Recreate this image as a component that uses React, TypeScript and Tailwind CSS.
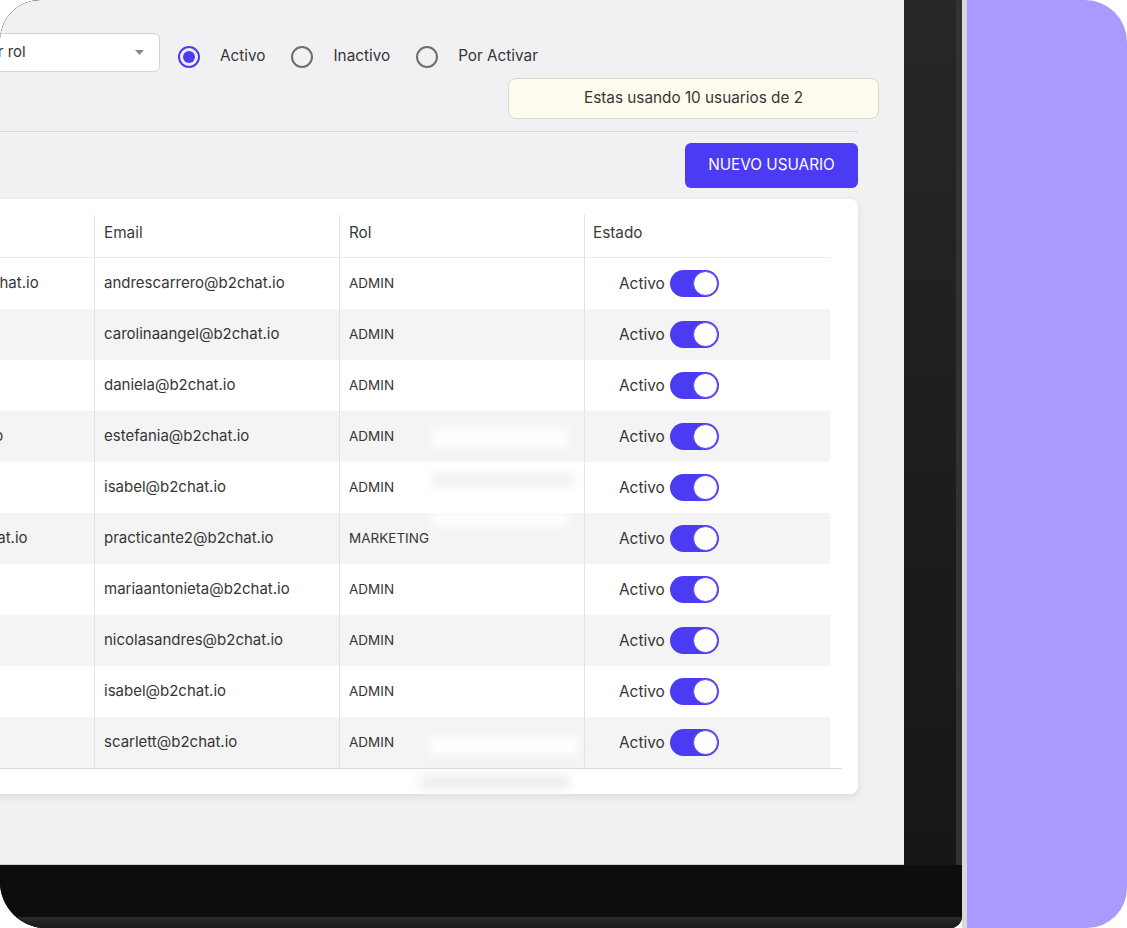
import React from "react";

type Row = { name: string; email: string; rol: string };

const rows: Row[] = [
  { name: "andrescarrero@b2chat.io", email: "andrescarrero@b2chat.io", rol: "ADMIN" },
  { name: "Carolina Angel", email: "carolinaangel@b2chat.io", rol: "ADMIN" },
  { name: "Daniela", email: "daniela@b2chat.io", rol: "ADMIN" },
  { name: "estefania@b2chat.io", email: "estefania@b2chat.io", rol: "ADMIN" },
  { name: "Isabel", email: "isabel@b2chat.io", rol: "ADMIN" },
  { name: "practicante2@b2chat.io", email: "practicante2@b2chat.io", rol: "MARKETING" },
  { name: "Maria Antonieta", email: "mariaantonieta@b2chat.io", rol: "ADMIN" },
  { name: "Nicolas Andres", email: "nicolasandres@b2chat.io", rol: "ADMIN" },
  { name: "Isabel", email: "isabel@b2chat.io", rol: "ADMIN" },
  { name: "Scarlett", email: "scarlett@b2chat.io", rol: "ADMIN" },
];

function Radio({ checked, label, first }: { checked?: boolean; label: string; first?: boolean }) {
  return (
    <div className={`flex items-center ${first ? "" : "ml-[26px]"}`}>
      {checked ? (
        <div className="w-[22px] h-[22px] rounded-full border-[2px] border-[#4b3bf2] flex items-center justify-center">
          <div className="w-[12px] h-[12px] rounded-full bg-[#4b3bf2]" />
        </div>
      ) : (
        <div className="w-[22px] h-[22px] rounded-full border-[2px] border-[#6e6e6e]" />
      )}
      <span className="ml-[20px] text-[15.3px] text-[#363636]">{label}</span>
    </div>
  );
}

function Toggle() {
  return (
    <div className="w-[49px] h-[27px] rounded-full bg-[#4b3bf2] p-[1px] flex justify-end">
      <div className="w-[25px] h-[25px] rounded-full bg-white border border-[#5a4bf4]" />
    </div>
  );
}

export default function App() {
  return (
    <div className="w-[1127px] h-[928px] bg-white flex overflow-hidden font-['Inter',sans-serif]">
      {/* Tablet */}
      <div className="w-[962px] h-[928px] flex flex-col rounded-tl-[40px] rounded-bl-[46px] rounded-br-[12px] overflow-hidden bg-[#0e0e0e]">
        <div className="flex h-[865px]">
          {/* Screen */}
          <div className="relative w-[904px] h-[865px] overflow-hidden rounded-tl-[40px] bg-[#f1f1f3] border-b border-[#cfcfd3]">
            <div className="flex flex-col w-[1100px] ml-[-242px] pt-[33px]">
              {/* Filters */}
              <div className="flex items-center h-[39px]">
                <div className="w-[131px] h-[39px] bg-white border border-[#d3d3d6] rounded-[6px]" />
                <div className="ml-[18px] w-[253px] h-[39px] bg-white border border-[#d3d3d6] rounded-[6px] flex items-center justify-between pl-[12px] pr-[15px]">
                  <span className="text-[15px] text-[#363636]">Seleccionar rol</span>
                  <svg width="9" height="5" viewBox="0 0 9 5">
                    <path d="M0 0 L9 0 L4.5 5 Z" fill="#8a8a8a" />
                  </svg>
                </div>
                <div className="ml-[18px] pt-[8px] flex items-center">
                  <Radio checked label="Activo" first />
                  <Radio label="Inactivo" />
                  <Radio label="Por Activar" />
                </div>
              </div>

              {/* Notice */}
              <div className="mt-[6px] flex justify-end mr-[-21px]">
                <div className="w-[371px] h-[41px] rounded-[8px] bg-[#fdfcee] border border-[#dcd8c6] flex items-center justify-center text-[15.3px] text-[#363636]">
                  Estas usando 10 usuarios de 2
                </div>
              </div>

              <div className="mt-[12px] h-px bg-[#d6d6da]" />

              <div className="mt-[11px] flex justify-end">
                <button className="w-[173px] h-[45px] rounded-[6px] bg-[#4b3bf5] text-white text-[15.3px] flex items-center justify-center">
                  NUEVO USUARIO
                </button>
              </div>

              {/* Table card */}
              <div className="mt-[11px] bg-white rounded-[8px] shadow-[0_3px_8px_rgba(0,0,0,0.09)] pt-[16px] pb-[25px] pr-[16px]">
                <div className="border-b border-[#dadada]">
                  {/* Header */}
                  <div className="flex h-[43px] w-[1072px] border-b border-[#ececec] text-[15.3px] text-[#3a3a3a]">
                    <div className="w-[91px]" />
                    <div className="w-[245px] pl-[9px] pt-[7px]">Usuario</div>
                    <div className="w-[245px] pl-[9px] pt-[7px] border-l border-[#e3e3e3]">Email</div>
                    <div className="w-[245px] pl-[9px] pt-[7px] border-l border-[#e3e3e3]">Rol</div>
                    <div className="w-[246px] pl-[8px] pt-[7px] border-l border-[#e3e3e3]">Estado</div>
                  </div>
                  {rows.map((r, i) => (
                    <div
                      key={i}
                      className={`flex h-[51px] w-[1072px] text-[#363636] ${i % 2 === 1 ? "bg-[#f4f4f5]" : "bg-white"}`}
                    >
                      <div className="w-[91px]" />
                      <div className="w-[245px] pl-[9px] flex items-center text-[15px] whitespace-nowrap">{r.name}</div>
                      <div className="w-[245px] pl-[9px] flex items-center text-[15px] border-l border-[#e3e3e3] whitespace-nowrap">
                        {r.email}
                      </div>
                      <div className="w-[245px] pl-[9px] flex items-center text-[13.5px] border-l border-[#e3e3e3]">{r.rol}</div>
                      <div className="w-[246px] pl-[34px] flex items-center gap-[5px] border-l border-[#e3e3e3]">
                        <span className="text-[15.4px]">Activo</span>
                        <Toggle />
                      </div>
                    </div>
                  ))}
                </div>
              </div>
            </div>

            {/* blur artifacts over the table */}
            <div className="absolute left-[432px] top-[428px] w-[136px] h-[20px] bg-white/90 blur-[4px]" />
            <div className="absolute left-[432px] top-[472px] w-[140px] h-[16px] bg-[#eeeeee]/80 blur-[4px]" />
            <div className="absolute left-[432px] top-[512px] w-[136px] h-[14px] bg-white/90 blur-[4px]" />
            <div className="absolute left-[430px] top-[737px] w-[148px] h-[18px] bg-white/90 blur-[4px]" />
            <div className="absolute left-[420px] top-[774px] w-[150px] h-[16px] bg-[#ececec]/80 blur-[4px]" />
          </div>
          {/* right bezel */}
          <div className="flex-1 bg-gradient-to-b from-[#272727] to-[#161616] border-r-[6px] border-[#323232]" />
        </div>
        {/* bottom bezel */}
        <div className="flex-1 flex flex-col justify-end bg-[#0d0d0d]">
          <div className="h-[11px] bg-gradient-to-b from-[#2a2a2a] to-[#1a1a1a]" />
        </div>
      </div>
      {/* highlight edge */}
      <div className="w-[5px] h-full bg-[#d8d8de]" />
      {/* purple background */}
      <div className="flex-1 h-full bg-[#a89bfd] rounded-tr-[42px] rounded-br-[40px]" />
    </div>
  );
}
